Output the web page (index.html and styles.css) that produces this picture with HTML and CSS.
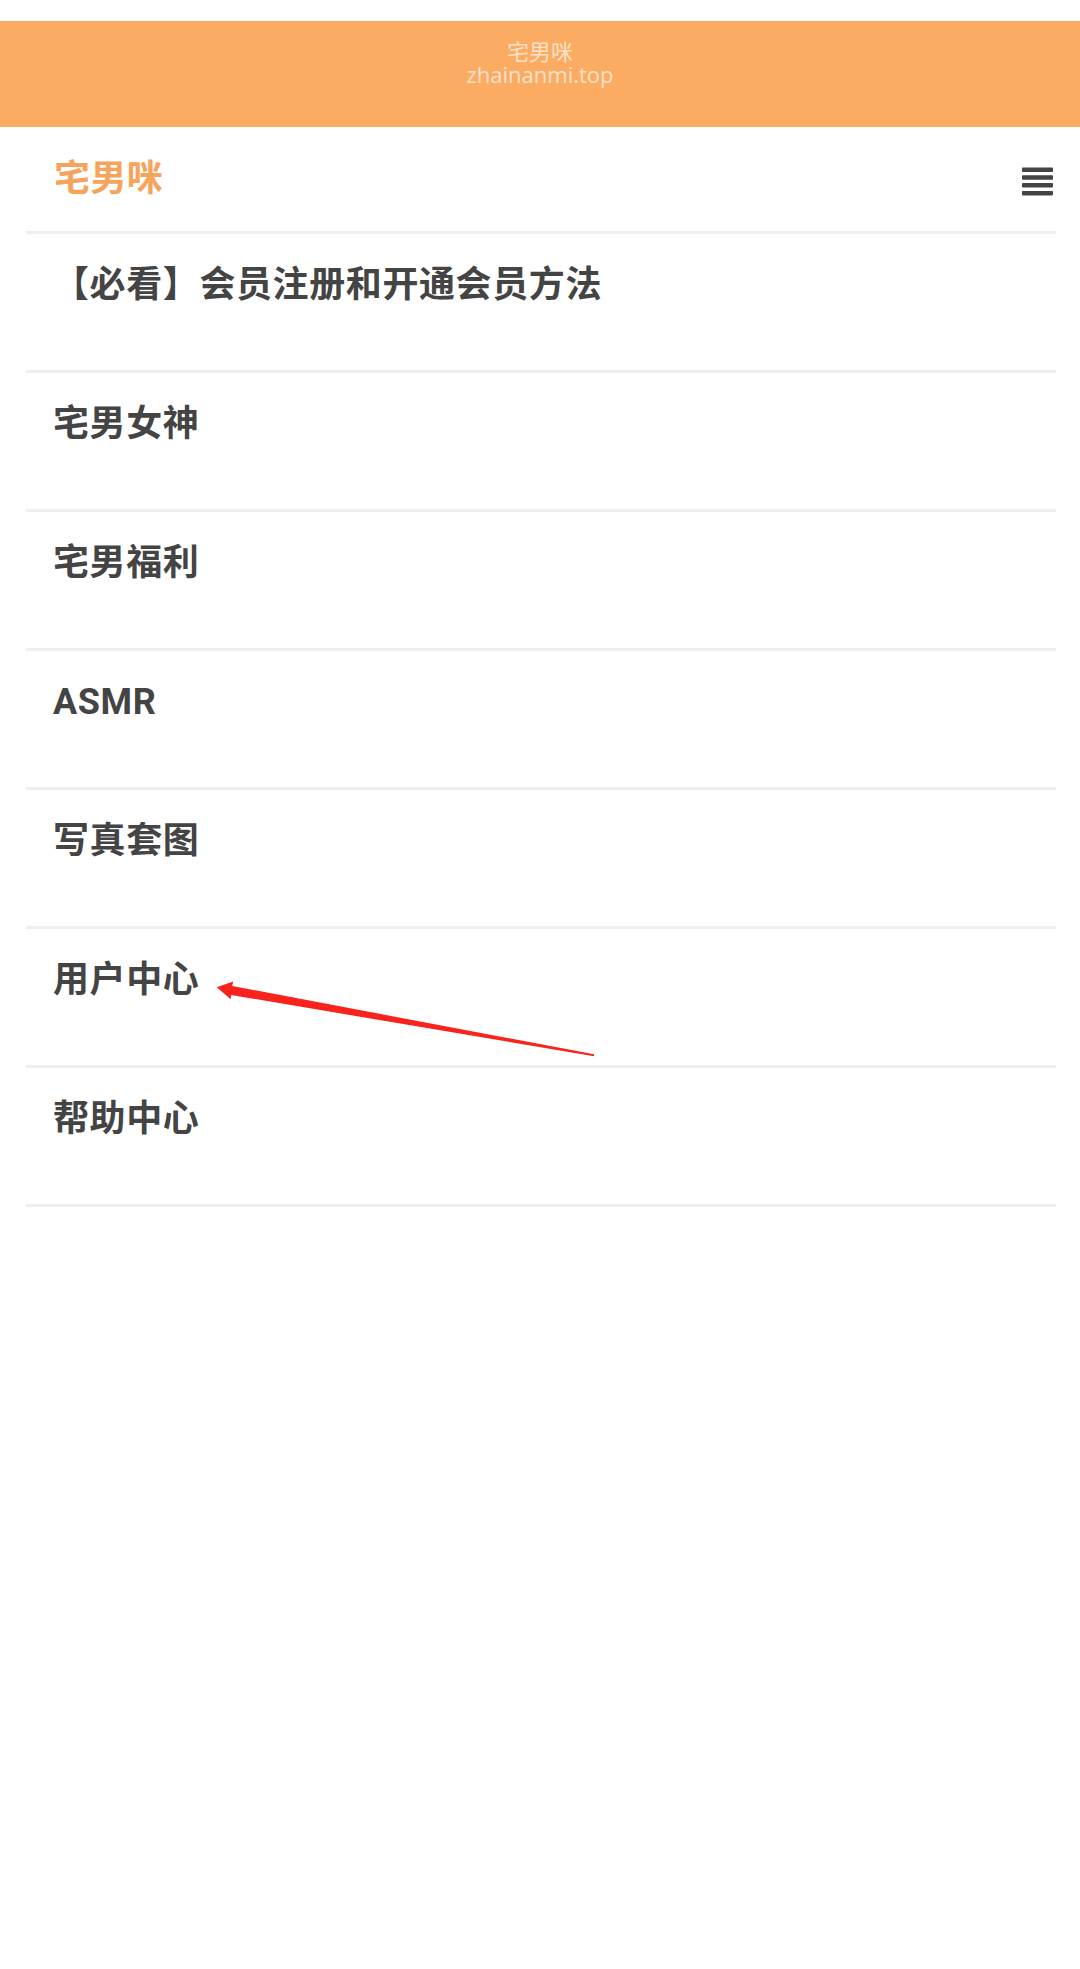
FILE: index.html
```html
<!DOCTYPE html>
<html lang="zh-CN">
<head>
<meta charset="utf-8">
<title>宅男咪</title>
<link rel="stylesheet" href="styles.css">
</head>
<body>
<div class="page">
  <header class="banner">
    <div class="banner-title">宅男咪</div>
    <div class="banner-domain">zhainanmi.top</div>
  </header>
  <div class="wrap">
    <nav class="navbar">
      <div class="logo">宅男咪</div>
      <svg class="menu-icon" width="31" height="29" viewBox="0 0 31 29" aria-hidden="true">
        <rect x="0" y="0.5" width="31" height="4.5" rx="0.8" fill="#444"/>
        <rect x="0" y="8.3" width="31" height="4.5" rx="0.8" fill="#444"/>
        <rect x="0" y="16.1" width="31" height="4.5" rx="0.8" fill="#444"/>
        <rect x="0" y="23.9" width="31" height="4.5" rx="0.8" fill="#444"/>
      </svg>
    </nav>
    <ul class="menu">
      <li class="menu-item">【必看】会员注册和开通会员方法</li>
      <li class="menu-item">宅男女神</li>
      <li class="menu-item">宅男福利</li>
      <li class="menu-item">ASMR</li>
      <li class="menu-item">写真套图</li>
      <li class="menu-item">用户中心</li>
      <li class="menu-item">帮助中心</li>
    </ul>
  </div>
  <svg class="annotation" width="1080" height="1969" viewBox="0 0 1080 1969" aria-hidden="true">
    <polygon points="216.7,987.3 233.3,981.5 232.2,986 594,1054.3 594,1056.2 231.2,995 230.7,999.2" fill="#f8231c"/>
  </svg>
</div>
</body>
</html>
```

FILE: styles.css
```css
html, body {
  margin: 0;
  padding: 0;
  background: #ffffff;
}

.page {
  position: relative;
  width: 1080px;
  min-height: 1969px;
  padding-top: 21px;
  box-sizing: border-box;
}

.banner {
  background: #fbac62;
  height: 106px;
  box-sizing: border-box;
  padding-top: 19px;
  text-align: center;
  color: rgba(255, 255, 255, 0.68);
  font-family: "Open Sans", "Noto Sans CJK SC", sans-serif;
  font-size: 22px;
  line-height: 23px;
}

.wrap {
  margin: 0 24px 0 26px;
  font-family: "Roboto", "Noto Sans CJK SC", sans-serif;
}

.navbar {
  height: 104px;
  border-bottom: 3px solid #eeeeee;
  display: flex;
  align-items: center;
  justify-content: space-between;
  padding-left: 28px;
}

.logo {
  color: #f6a45c;
  font-size: 36px;
  font-weight: 700;
  line-height: 54px;
  letter-spacing: 0.4px;
}

.menu-icon {
  display: block;
  margin-right: 3px;
  margin-top: 4px;
}

.menu {
  list-style: none;
  margin: 0;
  padding: 0;
}

.menu-item {
  box-sizing: content-box;
  border-bottom: 3px solid #eeeeee;
  padding: 24px 0 0 27px;
  height: 112px;
  color: #444444;
  font-size: 36px;
  font-weight: 700;
  line-height: 54px;
  letter-spacing: 0.6px;
}

.annotation {
  position: absolute;
  left: 0;
  top: 0;
  pointer-events: none;
}
```
